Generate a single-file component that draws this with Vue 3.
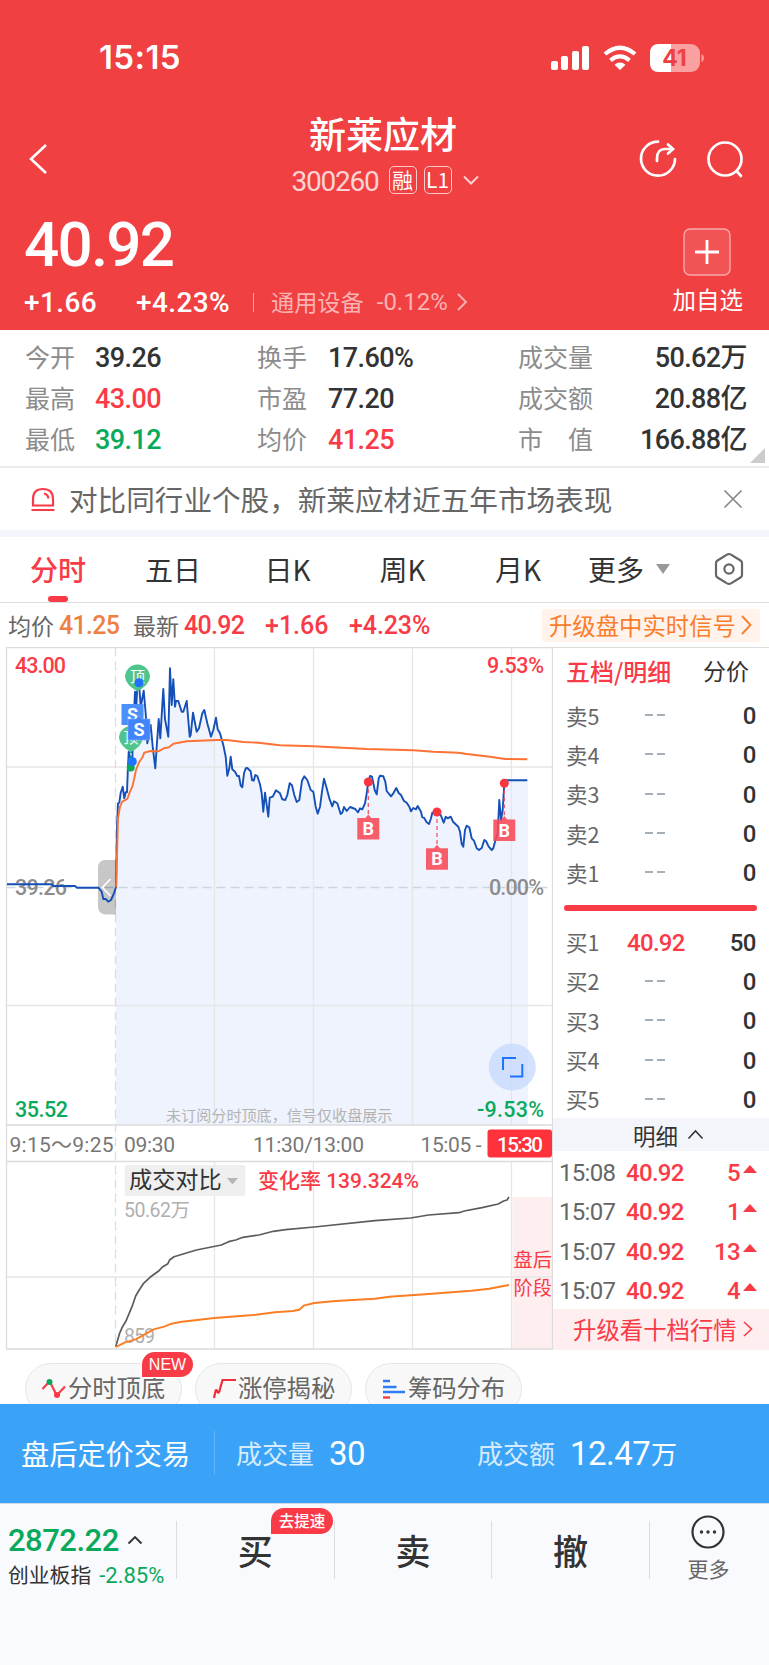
<template>
  <div class="app">
    <header class="top">
      <div class="status-bar">
        <span class="clock">15:15</span>
        <svg class="status-icons" width="156" height="30" viewBox="0 0 156 30">
          <g fill="#fff">
            <rect x="1" y="17" width="7" height="9" rx="2" />
            <rect x="11" y="12" width="7" height="14" rx="2" />
            <rect x="22" y="7" width="7" height="19" rx="2" />
            <rect x="32" y="2" width="7" height="24" rx="2" />
            <path d="M70 26 L64.5 20.8 Q70 16.400 75.500 20.800 Z" />
          </g>
          <g fill="none" stroke="#fff" stroke-width="4.200">
            <path d="M55 10 Q70 -2.500 85 10" />
            <path d="M60.500 16.300 Q70 8.500 79.500 16.300" />
          </g>
          <rect x="100" y="0" width="50" height="28" rx="9" fill="#f9a0a1" />
          <path d="M109 0 H121 V28 H109 Q100 28 100 19 V9 Q100 0 109 0 Z" fill="#fff" />
          <path d="M151.500 10 Q154 11 154 14 Q154 17 151.500 18 Z" fill="#f9a0a1" />
          <text x="124.500" y="22" class="battery-text" text-anchor="middle">41</text>
        </svg>
      </div>

      <div class="nav">
        <svg class="back" width="22" height="34" viewBox="0 0 22 34">
          <path d="M19 3 L4 17 L19 31" fill="none" stroke="#fff" stroke-width="2.600" />
        </svg>
        <div class="stock">
          <h1>新莱应材</h1>
          <div class="code-row">
            <span class="code num">300260</span>
            <span class="tag">融</span>
            <span class="tag">L1</span>
            <svg class="code-arrow" width="16" height="11" viewBox="0 0 16 11">
              <path d="M1 1.500 L8 8.500 L15 1.500" fill="none" stroke="#fcd3d3" stroke-width="2" />
            </svg>
          </div>
        </div>
        <svg class="share" width="40" height="40" viewBox="0 0 40 40" fill="none" stroke="#fff" stroke-width="2.700" stroke-linecap="round">
          <path d="M20 2.700 A17 17 0 1 0 37 20" />
          <path d="M19 22 V19.500 Q19 10 27 10 H34 M30 5.500 L35 10 L30 14.500" />
        </svg>
        <svg class="search" width="40" height="40" viewBox="0 0 40 40" fill="none" stroke="#fff" stroke-width="2.700" stroke-linecap="round">
          <circle cx="20" cy="20" r="16.500" />
          <path d="M31.500 32 L36 37" />
        </svg>
      </div>

      <div class="quote">
        <div class="quote-left">
          <div class="price num">40.92</div>
          <div class="change-row">
            <span class="change num">+1.66</span>
            <span class="change-pct num">+4.23%</span>
            <i class="bar"></i>
            <span class="sector">通用设备</span>
            <span class="sector-pct num">-0.12%</span>
            <svg width="11" height="20" viewBox="0 0 11 20">
              <path d="M1 2 L9 10 L1 18" fill="none" stroke="#f9b3b3" stroke-width="1.800" />
            </svg>
          </div>
        </div>
        <div class="favorite">
          <svg width="49" height="49" viewBox="0 0 49 49">
            <rect x="1" y="1" width="46" height="46" rx="6" fill="#f25354" stroke="#f8a9a9" stroke-width="1.400" />
            <path d="M12 24 H36 M24 12 V36" stroke="#fff" stroke-width="2.800" />
          </svg>
          <span>加自选</span>
        </div>
      </div>
    </header>

    <section class="stats">
      <div v-for="(row, i) in stats" :key="i" class="stats-row">
        <template v-for="cell in row" :key="cell.label">
          <span class="stats-label">{{ cell.label }}</span>
          <span class="stats-value num" :class="cell.color">{{ cell.value }}</span>
        </template>
      </div>
      <i class="corner"></i>
    </section>

    <section class="notice">
      <svg width="24" height="25" viewBox="0 0 24 25" fill="none" stroke="#f93b47" stroke-width="2.200">
        <path d="M2 18.500 V12 Q2 2 12 2 Q22 2 22 12 V18.500 Z M0.500 23 H23.500 M13 6.500 Q17 7.500 17.500 11.500" />
      </svg>
      <span class="notice-text">对比同行业个股，新莱应材近五年市场表现</span>
      <svg width="20" height="20" viewBox="0 0 20 20">
        <path d="M1.500 1.500 L18.500 18.500 M18.500 1.500 L1.500 18.500" stroke="#888" stroke-width="1.700" />
      </svg>
    </section>

    <nav class="tabs">
      <span v-for="tab in tabs" :key="tab" class="tab" :class="{ active: tab === activeTab }">{{ tab }}</span>
      <span class="tab more">更多<i class="caret"></i></span>
      <svg class="gear" width="30" height="34" viewBox="0 0 30 34" fill="none" stroke="#666" stroke-width="2.200">
        <path d="M15 2 Q16 2 17 2.600 L26.500 8.500 Q28 9.500 28 11 V23 Q28 24.500 26.500 25.500 L17 31.400 Q15 32.500 13 31.400 L3.500 25.500 Q2 24.500 2 23 V11 Q2 9.500 3.500 8.500 L13 2.600 Q14 2 15 2 Z" />
        <circle cx="15" cy="17" r="4.600" />
      </svg>
    </nav>

    <div class="summary">
      <span>均价</span>
      <span class="num avg">41.25</span>
      <span>最新</span>
      <span class="num last">40.92</span>
      <span class="num diff">+1.66</span>
      <span class="num pct">+4.23%</span>
      <span class="upgrade">
        升级盘中实时信号
        <svg width="11" height="22" viewBox="0 0 11 22">
          <path d="M1 2 L9.500 11 L1 20" fill="none" stroke="#fb7d2b" stroke-width="1.900" />
        </svg>
      </span>
    </div>

    <div class="board">
      <svg class="charts" width="553" height="703" viewBox="0 0 553 703">
        <polygon :points="areaPoints" fill="#eff3fe" />
        <rect x="512.500" y="550" width="40" height="152" fill="#feeeef" />
        <g stroke="#e6e6e6" stroke-width="1.300" fill="none">
          <path v-for="x in gridX" :key="x" :d="`M${x} 0.500 V478 M${x} 514 V702`" />
          <path d="M6.500 120 H552 M6.500 358.500 H552 M6.500 630 H552" />
          <path d="M115.500 0.500 V702" stroke="#ddd" stroke-dasharray="9 5" />
          <path d="M6.500 240.500 H549" stroke="#ccd6df" stroke-dasharray="9 5" />
          <path d="M6.500 0.500 H552.500 V702 H6.500 Z M6.500 478 H552.500 M6.500 514.500 H552.500" stroke="#dcdcdc" />
        </g>

        <g class="axis">
          <text x="15" y="25.500" textLength="51" fill="#f93b47">43.00</text>
          <text x="487" y="25.500" textLength="57" fill="#f93b47">9.53%</text>
          <text x="15" y="248" textLength="52" fill="#8c8c8c">39.26</text>
          <text x="489" y="248" textLength="55" fill="#8c8c8c">0.00%</text>
          <text x="15" y="469.500" textLength="53" fill="#09a95b">35.52</text>
          <text x="477" y="469.500" textLength="67" fill="#09a95b">-9.53%</text>
        </g>
        <text x="166" y="474" class="hint">未订阅分时顶底，信号仅收盘展示</text>

        <path d="M116 213 H106 Q98 213 98 221 V259 Q98 267.500 106 267.500 H116 Z" fill="#000" fill-opacity="0.220" />
        <path d="M110.500 232 L102.500 240.500 L110.500 249" fill="none" stroke="#fff" stroke-width="1.700" />

        <polyline :points="priceLine" fill="none" stroke="#1450b8" stroke-width="1.900" stroke-linejoin="round" />
        <polyline :points="avgLine" fill="none" stroke="#fd7235" stroke-width="1.900" stroke-linejoin="round" />

        <g class="peak">
          <circle cx="130.700" cy="120.500" r="4" fill="#09a95b" />
          <path d="M131 102 V118" stroke="#09a95b" stroke-width="2" stroke-dasharray="4 3" />
          <path d="M119 91 A12 12 0 1 1 143 91 Q142 99 131 105 Q120 99 119 91 Z" fill="#4fc48c" />
          <text x="131" y="96">顶</text>
          <path d="M125 30 A12.500 12.500 0 1 1 150 30 Q149 38 137.500 44.500 Q126 38 125 30 Z" fill="#4fc48c" />
          <text x="137.500" y="35">顶</text>
        </g>
        <circle cx="139" cy="35.700" r="4.500" fill="#1f74ff" />
        <circle cx="132.300" cy="114.500" r="4.500" fill="#1f74ff" />
        <g class="mark">
          <rect x="121.500" y="57" width="22" height="21" fill="#4a8ffc" />
          <text x="132.500" y="74">S</text>
          <path d="M128 72 H136 L139 68.500 L142 72 H150 V93 H128 Z" fill="#4285fb" stroke="#7fb0ff" stroke-width="0.600" />
          <text x="139" y="89">S</text>
          <g v-for="b in buyMarks" :key="b.x">
            <path :d="`M${b.x} ${b.dot} V${b.top - 2}`" stroke="#f45466" stroke-width="1.300" stroke-dasharray="4 3" />
            <circle :cx="b.x" :cy="b.dot" r="4.500" fill="#f93640" />
            <path :d="`M${b.x - 11} ${b.top} h8 l3 -3.500 l3 3.500 h8 v21.500 h-22 Z`" fill="#f94858" fill-opacity="0.880" />
            <text :x="b.x" :y="b.top + 17">B</text>
          </g>
        </g>

        <circle cx="512.300" cy="420" r="23.500" fill="#c5d8fc" fill-opacity="0.750" />
        <path d="M503 423 V411 H516 M522.300 417 V429.500 H510" fill="none" stroke="#1f74ff" stroke-width="2" />

        <g class="time">
          <text x="9.500" y="505" textLength="104">9:15～9:25</text>
          <text x="124" y="505" textLength="51">09:30</text>
          <text x="253" y="505" textLength="111">11:30/13:00</text>
          <text x="420.500" y="505" textLength="61">15:05 -</text>
          <rect x="487.500" y="482.500" width="64.500" height="28" rx="3" fill="#fd323a" />
          <text x="497" y="505" textLength="46" class="time-now">15:30</text>
        </g>

        <rect x="124.500" y="518" width="121" height="31" rx="3" fill="#efefef" />
        <text x="129" y="541" class="vol-name">成交对比</text>
        <path d="M227 531 H238 L232.500 537.500 Z" fill="#b5b5b5" />
        <text x="258" y="541" textLength="161" class="vol-rate">变化率 139.324%</text>
        <text x="124" y="570" textLength="66" class="vol-axis">50.62万</text>
        <text x="124" y="695.500" textLength="31" class="vol-axis">859</text>
        <text x="513.500" y="620" class="after">盘后</text>
        <text x="513.500" y="647.500" class="after">阶段</text>
        <polyline :points="volumeLine" fill="none" stroke="#5c5c5c" stroke-width="1.700" stroke-linejoin="round" />
        <polyline :points="volumePrevLine" fill="none" stroke="#fc7d22" stroke-width="1.900" stroke-linejoin="round" />
      </svg>

      <aside class="book">
        <div class="book-tabs">
          <span class="on">五档/明细</span>
          <span>分价</span>
        </div>
        <div v-for="n in [5, 4, 3, 2, 1]" :key="'s' + n" class="level">
          <span class="level-name">卖{{ n }}</span>
          <span class="empty"><i></i><i></i></span>
          <span class="qty num">0</span>
        </div>
        <div class="ratio"></div>
        <div v-for="n in 5" :key="'b' + n" class="level">
          <span class="level-name">买{{ n }}</span>
          <span v-if="n === 1" class="level-price num">40.92</span>
          <span v-else class="empty"><i></i><i></i></span>
          <span class="qty num">{{ n === 1 ? 50 : 0 }}</span>
        </div>
        <div class="detail-head">
          明细
          <svg width="17" height="11" viewBox="0 0 17 11">
            <path d="M1.500 9.500 L8.500 2 L15.500 9.500" fill="none" stroke="#333" stroke-width="1.600" />
          </svg>
        </div>
        <div v-for="(t, i) in ticks" :key="i" class="tick">
          <span class="tick-time num">{{ t.time }}</span>
          <span class="tick-price num">40.92</span>
          <span class="tick-qty num">{{ t.qty }}</span>
          <i class="up"></i>
        </div>
        <div class="ten">
          升级看十档行情
          <svg width="10" height="18" viewBox="0 0 10 18">
            <path d="M1 2 L8.500 9 L1 16" fill="none" stroke="#f93b47" stroke-width="1.600" />
          </svg>
        </div>
      </aside>
    </div>

    <div class="chips">
      <div class="chip">
        <svg width="26" height="24" viewBox="0 0 26 24">
          <path d="M1.500 12 L8 5 M10 7 L15 17 M17 17 L24 9.500" fill="none" stroke="#f93b47" stroke-width="2.200" />
          <circle cx="8.500" cy="5" r="3" fill="#09a95b" />
          <circle cx="16" cy="18" r="3" fill="#f93b47" />
        </svg>
        <span>分时顶底</span>
        <span class="new">NEW</span>
      </div>
      <div class="chip">
        <svg width="26" height="24" viewBox="0 0 26 24">
          <path d="M3 21 L4.500 14 Q5.500 12 6.500 15 Q8 17 9 12 L11.500 3 H25" fill="none" stroke="#f02f3c" stroke-width="2.200" />
        </svg>
        <span>涨停揭秘</span>
      </div>
      <div class="chip">
        <svg width="26" height="24" viewBox="0 0 26 24" stroke-width="2.400">
          <path d="M2 4 H9 M2 10 H15.500 M2 15 H24" stroke="#2f7bf6" />
          <path d="M2 20.500 H9" stroke="#f93b47" />
        </svg>
        <span>筹码分布</span>
      </div>
    </div>

    <div class="after-hours">
      <span class="ah-title">盘后定价交易</span>
      <span class="ah-label">成交量</span>
      <span class="ah-value num">30</span>
      <span class="ah-label second">成交额</span>
      <span class="ah-value num">12.47</span>
      <span class="ah-unit">万</span>
    </div>

    <footer class="bottom">
      <div class="index">
        <div class="index-value num">
          2872.22
          <svg width="16" height="10" viewBox="0 0 16 10">
            <path d="M1.500 8.500 L8 2 L14.500 8.500" fill="none" stroke="#333" stroke-width="1.900" />
          </svg>
        </div>
        <div class="index-name">创业板指<span class="num">-2.85%</span></div>
      </div>
      <div class="action">买<span class="speed">去提速</span></div>
      <div class="action">卖</div>
      <div class="action">撤</div>
      <div class="others">
        <svg width="36" height="36" viewBox="0 0 36 36">
          <circle cx="18" cy="18" r="15.500" fill="none" stroke="#333" stroke-width="2.200" />
          <g fill="#333">
            <circle cx="11.500" cy="18" r="1.700" />
            <circle cx="18" cy="18" r="1.700" />
            <circle cx="24.500" cy="18" r="1.700" />
          </g>
        </svg>
        <span>更多</span>
      </div>
    </footer>
  </div>
</template>

<script setup>
import { ref } from 'vue'

const stats = [
  [
    { label: '今开', value: '39.26' },
    { label: '换手', value: '17.60%' },
    { label: '成交量', value: '50.62万' }
  ],
  [
    { label: '最高', value: '43.00', color: 'red' },
    { label: '市盈', value: '77.20' },
    { label: '成交额', value: '20.88亿' }
  ],
  [
    { label: '最低', value: '39.12', color: 'green' },
    { label: '均价', value: '41.25', color: 'red' },
    { label: '市　值', value: '166.88亿' }
  ]
]

const tabs = ['分时', '五日', '日K', '周K', '月K']
const activeTab = ref('分时')

const ticks = [
  { time: '15:08', qty: 5 },
  { time: '15:07', qty: 1 },
  { time: '15:07', qty: 13 },
  { time: '15:07', qty: 4 }
]

const gridX = [214.5, 313.5, 412.5, 511.5]

const buyMarks = [
  { x: 368.3, dot: 135, top: 171 },
  { x: 437, dot: 165, top: 201.3 },
  { x: 504.3, dot: 136.3, top: 172.5 }
]

// call auction, 9:15 - 9:25
const auction =
  '7,237.3 51.7,237.3 53.3,239 75,239 76.7,240.7 98.3,240.7 101.7,244.7 103.3,252 105.7,252 108.3,254.7 111,253 113.3,248 116,240.3'

// continuous trading
const trading =
  '117,179.7 118,156.3 119.3,155.7 120.7,145.7 122.7,139.7 124.3,151.3 125.7,145.3 127,145.3 127.7,126.3 128.7,104.7 130,109.7 132.3,114.3 132.7,96.3 133.7,73 135,44.7 136.3,59.7 137.3,39.7 139,35.7 140.7,59.7 143.7,43.7 145.7,66.3 147.3,96.3 150.7,78 152.7,99.7 155.3,121.3 156.7,99.7 158.7,72 160.3,91.3 163.3,42 165,72.3 168.3,89.7 170,21.3 171.7,58 173.3,32.3 175,59.7 176,54 178.3,54 181.7,64.7 183.3,64.7 186.7,54 189.7,89.7 190.7,88 193,65.7 196.7,84.7 199,81.3 202.3,66.3 204.3,63 207.3,76.3 211,89.7 213.3,83 216,70.7 217.7,82.3 220,86.3 223.3,98 225.7,109.7 227.3,128.7 229.3,121.3 230.7,109.7 232.3,122.3 ' +
  '235,124.7 237.3,129 239,129 240.7,138.7 242.3,140.3 244,126.3 245.7,121.3 247.3,121 250.7,124.3 252,133 253.7,133.7 255.3,128 257.3,129 260,137.3 261.7,146.3 263.3,164.7 265,145.7 268.3,169.7 269.7,150.7 272.7,149.7 276,143.3 280,146.3 282.3,152.3 285.3,153 287.3,148 289.7,136.3 292,138.3 294.3,148 296.7,155 299.3,153 302,133.7 304.3,129.3 307.3,133 310.7,143 313.3,144.7 315.7,159.7 317.7,166.7 320,159.7 322,144.7 324,131.7 326.7,141.3 329.3,151.3 332.3,159.3 334,154.3 337.3,156.3 340.7,167 342.3,165.7 344,160 346.7,164 350,160 355.3,162 358,165.3 360,161.3 362.3,162.3 365,156.3 366.7,146.3 368.3,134.7 370,129 372,129.7 374.7,143 376.7,147.3 378.7,131.3 380,128.7 383.3,129.3 385.3,134.7 386.7,144 391,149.3 393.3,146.3 396.3,141 398.7,146 401,148 404,154 406.7,155.7 409.3,159.7 411,164.3 413.3,161 416,162.3 417.7,159 ' +
  '421,164.7 422.3,170.3 424,170.7 426.7,175.3 429,177 431,171.3 432.3,165.7 437,165 440.7,168 443.7,175.7 445.7,169.7 447.7,171.3 450.7,169.7 453,174.7 458.3,179.7 460,184.7 461.7,197 463.3,199.7 465,183 466.7,178.7 469.3,180.3 471.7,191.3 474,193.7 476.7,201.3 479,203 481.7,201 484.3,193 486,194 488.7,199.7 491.7,203 493.3,201.3 495,194.7 497.7,186.3 499.3,153 501,173 502.7,163 504.3,136.3 506.7,133.3 527.3,133.3'

const priceLine = `${auction} ${trading}`
const areaPoints = `116,478 116,240.3 ${trading} 528,133.3 528,478`

const avgLine =
  '116.3,240.3 117,209.7 118,171.3 120,159.7 122.3,154.7 127.3,152 130,144.7 132.3,139.7 134.3,131.3 136,123 139.3,114.7 142.3,110.7 144.3,105.7 150.7,104 158.3,104.3 164,101.3 169,100.3 173.3,96.7 186.7,94.3 216.7,93 226.7,93 243.3,95 258.3,95.7 280,98.3 313.3,99.3 366.7,102 413.3,103.3 433.3,104.7 458.3,105.7 466.7,107 490,109.7 505,112 527.3,112.3'

const volumeLine =
  '115.7,699.7 119.6,686.3 122.5,679.7 126,674 132,659.7 135.7,649 138.6,644 143.6,636.3 150,630.3 159,623.7 162.5,620 167.9,616.7 169.6,613 174,609.7 196.4,603 221.4,598 228.6,594.7 235.7,593 242.9,590.3 259,588 273.2,584.3 285.7,582.7 314.3,580 375,573.7 410.7,571 428.6,568 459,565.7 464.3,564 482,560.7 498.2,557 503.6,554 507,553 509,550'

const volumePrevLine =
  '116,700 125,695.3 135.7,692.3 153.6,682.3 164.3,679.7 171.4,676.7 182,674.7 214.3,671 253.6,668 275,665.3 292.9,664 299.3,662.7 303.6,658.7 314.3,656 335.7,654 375,651.7 389.3,649.7 428.6,647 471.4,643.7 489.3,641.7 509,638'
</script>

<style>
body {
  background: #fff;
}
</style>

<style scoped>
.app {
  width: 769px;
  height: 1665px;
  overflow: hidden;
  display: flex;
  flex-direction: column;
  background: #fff;
  color: #333;
  font-family: "Noto Sans CJK SC", sans-serif;
  white-space: nowrap;
}

.app > * {
  flex: none;
  box-sizing: border-box;
}

svg {
  display: block;
  flex: none;
}

.num {
  font-family: Roboto, "Noto Sans CJK SC", sans-serif;
}

.red {
  color: #f93b47;
}

.green {
  color: #09a95b;
}

/* header */
.top {
  height: 330px;
  background: #f04042;
  color: #fff;
}

.status-bar {
  height: 114px;
  padding: 38px 0 0 99px;
  box-sizing: border-box;
  display: flex;
}

.clock {
  width: 451px;
  font-family: Inter, sans-serif;
  font-size: 33px;
  line-height: 39px;
  font-weight: 600;
  letter-spacing: 0.4px;
}

.status-icons {
  margin-top: 6px;
}

.battery-text {
  font: 700 23px Inter, sans-serif;
  fill: #f04042;
}

.nav {
  height: 90px;
  display: flex;
  padding: 0 24px 0 27px;
}

.back {
  margin-top: 28px;
}

.stock {
  width: 480px;
  margin-left: 94px;
  display: flex;
  flex-direction: column;
  align-items: center;
}

h1 {
  margin: 0;
  font-size: 37px;
  line-height: 38px;
  font-weight: 500;
}

.code-row {
  margin: 12px 0 0 4px;
  display: flex;
  align-items: center;
  height: 32px;
}

.code {
  padding-top: 2px;
  font-size: 28px;
  letter-spacing: -1.2px;
  color: #fcd3d3;
  margin-right: 10px;
}

.tag {
  width: 26px;
  height: 26px;
  border: 1.5px solid #fbcaca;
  border-radius: 5px;
  margin-right: 7px;
  font-size: 21px;
  line-height: 24px;
  text-align: center;
}

.code-arrow {
  margin-left: 4px;
}

.share {
  margin: 25px 0 0 15px;
}

.search {
  margin: 25px 0 0 27px;
}

.quote {
  display: flex;
  justify-content: space-between;
  padding: 0 26px 0 24px;
}

.price {
  height: 80px;
  font-size: 62px;
  line-height: 82px;
  font-weight: 500;
  letter-spacing: -1.8px;
}

.change-row {
  display: flex;
  align-items: center;
  height: 36px;
}

.change,
.change-pct {
  width: 112px;
  font-size: 28px;
  font-weight: 500;
  letter-spacing: 0.4px;
}

.change-pct {
  width: 117px;
}

.bar {
  width: 1px;
  height: 19px;
  background: #f9a5a5;
}

.sector {
  margin: 0 13px 0 17px;
  padding-bottom: 3px;
  font-size: 23.2px;
  color: #f9b3b3;
}

.sector-pct {
  width: 80px;
  font-size: 24px;
  color: #f9b3b3;
}

.favorite {
  display: flex;
  flex-direction: column;
  align-items: center;
  padding-top: 24px;
  font-size: 23.5px;
  line-height: 30px;
}

.favorite span {
  margin-top: 7px;
}

/* stats */
.stats {
  position: relative;
  height: 138px;
  padding: 6px 22px 0 25px;
  border-bottom: 2px solid #ececec;
}

.stats-row {
  display: grid;
  grid-template-columns: 70px 162px 71px 190px 90px 1fr;
  height: 41px;
  align-items: center;
}

.stats-label {
  font-size: 25px;
  color: #8c8c8c;
  line-height: 36px;
  padding-bottom: 2px;
}

.stats-value {
  font-size: 27px;
  font-weight: 500;
  letter-spacing: -0.6px;
  line-height: 36px;
  padding-top: 3px;
}

.stats-value:last-child {
  text-align: right;
}

.corner {
  position: absolute;
  right: 4px;
  bottom: 3px;
  border-left: 15px solid transparent;
  border-bottom: 15px solid #ccc;
}

/* notice */
.notice {
  height: 69px;
  display: flex;
  align-items: center;
  padding: 0 26px 0 31px;
  border-bottom: 7px solid #f3f5fa;
}

.notice-text {
  flex: 1;
  margin-left: 14px;
  padding-bottom: 2px;
  font-size: 28.6px;
  color: #666;
}

/* tabs */
.tabs {
  height: 66px;
  display: grid;
  grid-template-columns: 116px 114px 115px 115px 116px 102px 1fr;
  align-items: center;
  border-bottom: 1px solid #ddd;
  font-size: 28px;
}

.tab {
  position: relative;
  text-align: center;
  line-height: 62px;
  padding-bottom: 2px;
}

.active {
  color: #f93b47;
  font-weight: 500;
}

.active::after {
  content: "";
  position: absolute;
  left: 48px;
  bottom: 0;
  width: 20px;
  height: 6px;
  border-radius: 3px;
  background: #f93b47;
}

.more {
  display: flex;
  align-items: center;
  padding-left: 12px;
}

.caret {
  margin-left: 12px;
  border: 7px solid transparent;
  border-top: 10px solid #999;
  border-bottom: 0;
}

.gear {
  margin: -2px 0 0 36px;
}

/* line above the chart */
.summary {
  height: 44px;
  display: flex;
  align-items: center;
  padding: 0 9px 0 8px;
  font-size: 23px;
  color: #666;
}

.summary > span {
  padding-bottom: 1px;
}

.summary .num {
  width: 74px;
  margin-left: 5px;
  padding: 1px 0 0;
  font-size: 25px;
  font-weight: 500;
  letter-spacing: -0.7px;
  color: #f93b47;
}

.summary .avg {
  color: #ee8044;
}

.summary .last {
  width: 76px;
}

.summary .diff {
  width: 79px;
  letter-spacing: 0;
}

.summary .pct {
  letter-spacing: -0.1px;
}

.summary .upgrade {
  margin-left: auto;
  display: flex;
  align-items: center;
  gap: 5px;
  height: 32px;
  padding: 0 8px 1px 7px;
  border-radius: 3px;
  background: #fff3eb;
  color: #fb7d2b;
  font-size: 23.4px;
}

/* charts */
.board {
  display: flex;
  height: 703px;
}

.charts text {
  font-family: Roboto, "Noto Sans CJK SC", sans-serif;
}

.axis text {
  font-size: 21.5px;
  font-weight: 500;
}

.charts .hint {
  font-size: 15.1px;
  fill: #b3b3b3;
}

.peak text {
  font-size: 15px;
  fill: #fff;
  text-anchor: middle;
}

.mark text {
  font-size: 18px;
  font-weight: 700;
  fill: #fff;
  text-anchor: middle;
}

.time text {
  font-size: 21px;
  fill: #777;
}

.time .time-now {
  fill: #fff;
  font-size: 20.5px;
  font-weight: 500;
}

.charts .vol-name {
  font-size: 23.2px;
  fill: #333;
}

.charts .vol-rate {
  font-size: 21px;
  font-weight: 500;
  fill: #f93b47;
}

.charts .vol-axis {
  font-size: 19.5px;
  fill: #b0b0b0;
}

.charts .after {
  font-size: 19.2px;
  fill: #f93b47;
}

/* order book */
.book {
  width: 216px;
  box-sizing: border-box;
  border-top: 1px solid #ddd;
}

.book-tabs {
  display: flex;
  justify-content: space-between;
  height: 47.5px;
  padding: 0 20px 0 13px;
  line-height: 45px;
  font-size: 23px;
}

.on {
  color: #f93b47;
  font-size: 24px;
  font-weight: 500;
}

.level {
  display: grid;
  grid-template-columns: 61px 76px 1fr;
  align-items: center;
  height: 39.3px;
  padding: 0 13px;
}

.level-name {
  font-size: 21.5px;
  color: #666;
}

.empty {
  display: flex;
  gap: 4px;
  padding-left: 18px;
}

.empty i {
  width: 8px;
  height: 2px;
  background: #a5afba;
}

.level-price {
  padding-top: 2px;
  font-size: 24px;
  font-weight: 500;
  letter-spacing: -0.7px;
  color: #f93b47;
}

.qty {
  padding-top: 2px;
  font-size: 24px;
  font-weight: 500;
  text-align: right;
  letter-spacing: -0.5px;
}

.ratio {
  height: 6px;
  margin: 13px 12px 11px 11px;
  border-radius: 3px;
  background: #f93b47;
}

.detail-head {
  display: flex;
  align-items: center;
  gap: 9px;
  height: 33px;
  padding-left: 80px;
  background: #f3f5fa;
  font-size: 22.5px;
}

.tick {
  display: flex;
  align-items: center;
  height: 39.3px;
  padding: 4px 12px 0 6px;
  box-sizing: border-box;
  font-size: 24px;
  letter-spacing: -0.7px;
}

.tick-time {
  width: 67px;
  color: #666;
}

.tick-price {
  width: 60px;
  color: #f93b47;
  font-weight: 500;
}

.tick-qty {
  flex: 1;
  text-align: right;
  color: #f93b47;
  font-weight: 500;
}

.up {
  margin: -8px 0 0 3px;
  border: 7px solid transparent;
  border-bottom: 8px solid #f93b47;
  border-top: 0;
}

.ten {
  display: flex;
  align-items: center;
  gap: 6px;
  height: 41px;
  padding-left: 20px;
  background: #feeeef;
  color: #f93b47;
  font-size: 23.4px;
}

/* chips */
.chips {
  display: flex;
  gap: 13px;
  height: 54px;
  padding: 13px 25px 0;
  overflow: hidden;
}

.chip {
  position: relative;
  display: flex;
  align-items: center;
  box-sizing: border-box;
  width: 157px;
  height: 52px;
  padding-left: 15px;
  border: 1px solid #e6e6e6;
  border-radius: 26px;
  background: #f8f8f8;
  color: #666;
  font-size: 24.3px;
  line-height: 30px;
  gap: 1px;
}

.chip span {
  margin-bottom: 4px;
}

.chip .new {
  position: absolute;
  top: -12px;
  left: 116px;
  width: 51px;
  height: 25px;
  margin: 0;
  border-radius: 13px 13px 13px 0;
  background: #f93b47;
  box-shadow: 0 0 0 1px #fff;
  color: #fff;
  font: 16px/26px "Liberation Sans", sans-serif;
  text-align: center;
}

/* after-hours bar */
.after-hours {
  display: flex;
  align-items: center;
  height: 99px;
  padding: 0 0 2px 21px;
  background: #3ba3f7;
  color: #fff;
  font-size: 28.2px;
}

.ah-title {
  width: 193px;
  line-height: 44px;
  border-right: 1px solid #62b5f9;
}

.ah-label {
  margin-left: 21px;
  font-size: 26px;
  color: #d6ecfe;
}

.ah-value {
  margin-left: 15px;
  padding-top: 2px;
  width: 70px;
  font-size: 33px;
  letter-spacing: -0.5px;
}

.second {
  margin-left: 78px;
}

.ah-unit {
  margin-left: 11px;
  font-size: 26px;
}

/* trade bar */
.bottom {
  display: flex;
  height: 162px;
  padding-top: 17px;
  border-top: 1px solid #d5dbe3;
  background: #f9fafd;
}

.index {
  width: 176px;
  padding-left: 8px;
  box-sizing: border-box;
}

.index-value {
  display: flex;
  align-items: center;
  gap: 8px;
  height: 38px;
  font-size: 31px;
  font-weight: 500;
  letter-spacing: -0.5px;
  color: #09a95b;
}

.index-name {
  font-size: 20.8px;
  line-height: 31px;
}

.index-name .num {
  margin-left: 8px;
  color: #09a95b;
  font-size: 22px;
}

.action {
  position: relative;
  box-sizing: border-box;
  width: 157.6px;
  height: 58px;
  border-left: 1px solid #ddd;
  font-size: 35px;
  font-weight: 500;
  line-height: 57px;
  text-align: center;
}

.speed {
  position: absolute;
  top: -13px;
  left: 94px;
  width: 62px;
  height: 26px;
  border-radius: 13px 13px 13px 0;
  background: #f93b47;
  color: #fff;
  font-size: 15.5px;
  line-height: 25px;
}

.others {
  flex: 1;
  height: 58px;
  padding-right: 2px;
  border-left: 1px solid #ddd;
  display: flex;
  flex-direction: column;
  align-items: center;
  font-size: 21px;
  color: #666;
}

.others svg {
  margin-top: -7px;
}

.others span {
  line-height: 36px;
}
</style>
